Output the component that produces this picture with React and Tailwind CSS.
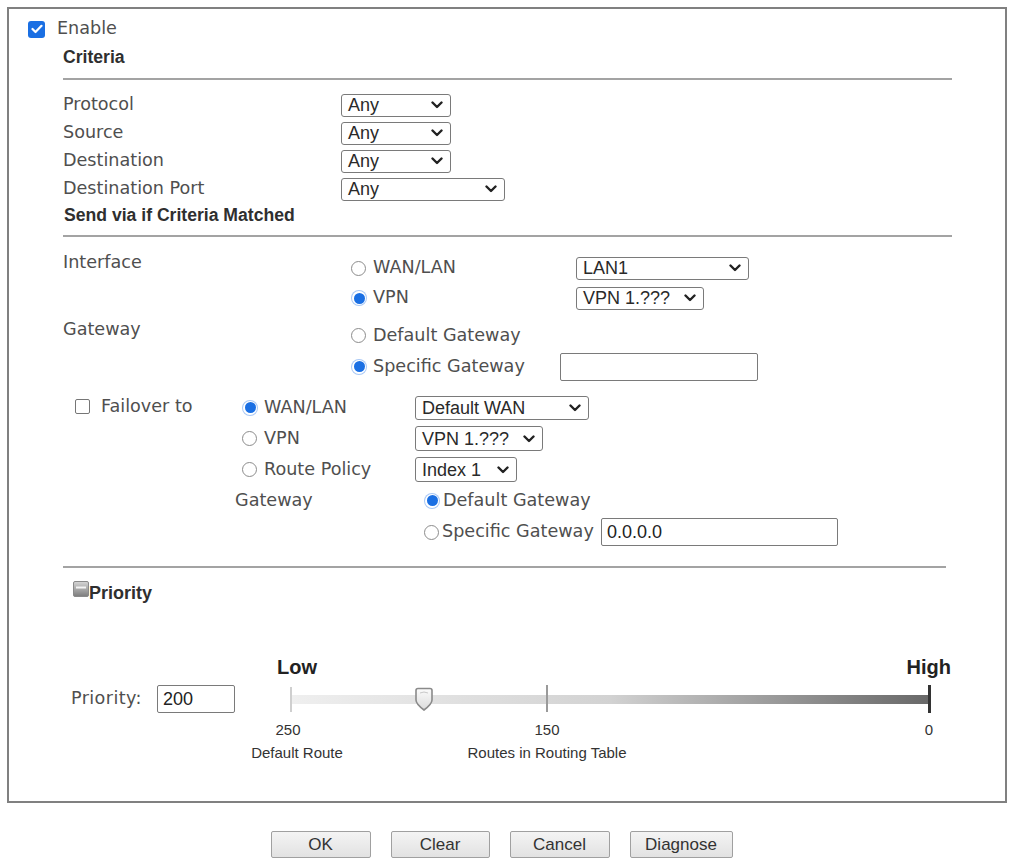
import React from "react";

const label = "font-['DejaVu_Sans',sans-serif] text-[17.6px] leading-none text-[#4f4f4f]";
const bold = "font-['Liberation_Sans',Arial,sans-serif] text-[17.6px] font-bold leading-none text-[#2f2f2f]";
const arial = "font-['Liberation_Sans',Arial,sans-serif]";

const Chevron = () => (
  <svg width="12" height="8" viewBox="0 0 12 8" className="shrink-0">
    <path d="M1.5 1.5 L6 6 L10.5 1.5" stroke="#222" strokeWidth="2.4" fill="none" strokeLinecap="round" strokeLinejoin="round" />
  </svg>
);

const Select = ({ w, h = "h-[23px]", text }) => (
  <div className={`flex ${h} ${w} items-center justify-between rounded-[3px] border border-[#7a7a7a] bg-white pl-[6px] pr-[7px]`}>
    <span className={`${arial} text-[18px] leading-none text-[#2a2a2a]`}>{text}</span>
    <Chevron />
  </div>
);

const Radio = ({ checked }) =>
  checked ? (
    <div className="flex h-[16px] w-[16px] shrink-0 items-center justify-center rounded-full bg-[#a9c8f5]">
      <div className="flex h-[14px] w-[14px] items-center justify-center rounded-full bg-white">
        <div className="h-[11px] w-[11px] rounded-full bg-[#1a6fe3]" />
      </div>
    </div>
  ) : (
    <div className="h-[15px] w-[15px] shrink-0 rounded-full border border-[#8c8c8c] bg-white" />
  );

const TextBox = ({ w, value = "" }) => (
  <div className={`flex h-[28px] ${w} items-center rounded-[2px] border border-[#7a7a7a] bg-white px-[5px]`}>
    <span className={`${arial} text-[18px] leading-none text-[#222]`}>{value}</span>
  </div>
);

const Divider = ({ w }) => <div className={`ml-[54px] ${w} border-t-2 border-[#a3a3a3]`} />;

const CriteriaRow = ({ name, w }) => (
  <div className="flex h-[28px] items-center pl-[54px]">
    <div className={`w-[278px] ${label}`}>{name}</div>
    <Select w={w} text="Any" />
  </div>
);

const Btn = ({ children, w = "w-[100px]" }) => (
  <button className={`h-[27px] ${w} rounded-[2px] border border-[#a0a0a0] bg-gradient-to-b from-[#f4f4f4] to-[#e2e2e2] ${arial} text-[17px] leading-none text-[#333]`}>
    {children}
  </button>
);

const Thumb = () => (
  <svg width="22" height="25" viewBox="0 0 22 25">
    <defs>
      <linearGradient id="tg" x1="0" y1="0" x2="0" y2="1">
        <stop offset="0" stopColor="#fbfbfb" />
        <stop offset="1" stopColor="#dcdcdc" />
      </linearGradient>
    </defs>
    <path d="M3 3.5 Q3 1.5 5 1.5 L17 1.5 Q19 1.5 19 3.5 L19 13 Q19 17 11 23 Q3 17 3 13 Z" fill="url(#tg)" stroke="#8a8a8a" strokeWidth="1.6" />
    <path d="M7 6 Q11 4 15 6" stroke="#c8c8c8" strokeWidth="1" fill="none" />
  </svg>
);

const PriorityIcon = () => (
  <svg width="16" height="16" viewBox="0 0 16 16" className="mb-[8px] shrink-0">
    <defs>
      <linearGradient id="pg" x1="0" y1="0" x2="0" y2="1">
        <stop offset="0" stopColor="#d6d6d6" />
        <stop offset="0.5" stopColor="#a9a9a9" />
        <stop offset="1" stopColor="#7c7c7c" />
      </linearGradient>
    </defs>
    <rect x="0.5" y="0.5" width="15" height="15" rx="1.5" fill="url(#pg)" stroke="#8a8a8a" />
    <rect x="3" y="5.5" width="10" height="2" fill="#f4f4f4" />
  </svg>
);

export default function App() {
  return (
    <div className="h-[865px] w-[1012px] bg-white pl-[7px] pt-[7px]">
      <div className="h-[796px] w-[1000px] border-2 border-[#808080]">
        {/* Enable */}
        <div className="mt-[8px] flex h-[24px] items-center pl-[19px]">
          <div className="flex h-[17px] w-[17px] items-center justify-center rounded-[3px] bg-[#1a6fe3]">
            <svg width="12" height="10" viewBox="0 0 12 10">
              <path d="M1.5 5 L4.5 8 L10.5 1.8" stroke="#fff" strokeWidth="2.2" fill="none" strokeLinecap="round" strokeLinejoin="round" />
            </svg>
          </div>
          <span className={`ml-[12px] ${label} text-[#3a3a3a]`}>Enable</span>
        </div>

        {/* Criteria */}
        <div className="mt-[5px] flex h-[24px] items-center pl-[54px]">
          <span className={bold}>Criteria</span>
        </div>
        <div className="mt-[8px]">
          <Divider w="w-[889px]" />
        </div>

        <div className="mt-[11px]">
          <CriteriaRow name="Protocol" w="w-[110px]" />
          <CriteriaRow name="Source" w="w-[110px]" />
          <CriteriaRow name="Destination" w="w-[110px]" />
          <CriteriaRow name="Destination Port" w="w-[164px]" />
        </div>

        <div className="flex h-[26px] items-center pl-[55px]">
          <span className={bold}>Send via if Criteria Matched</span>
        </div>
        <div className="mt-[6px]">
          <Divider w="w-[889px]" />
        </div>

        {/* Interface */}
        <div className="mt-[16px] flex pl-[54px]">
          <div className={`w-[278px] pt-[1px] ${label}`}>Interface</div>
          <div>
            <div className="flex h-[30px] items-center">
              <div className="flex w-[235px] items-center pl-[10px]">
                <Radio />
                <span className={`ml-[7px] ${label} text-[#3e3e3e]`}>WAN/LAN</span>
              </div>
              <Select w="w-[173px]" text="LAN1" />
            </div>
            <div className="flex h-[30px] items-center">
              <div className="flex w-[235px] items-center pl-[10px]">
                <Radio checked />
                <span className={`ml-[6px] ${label} text-[#3e3e3e]`}>VPN</span>
              </div>
              <Select w="w-[128px]" text="VPN 1.???" />
            </div>
          </div>
        </div>

        {/* Gateway */}
        <div className="mt-[7px] flex pl-[54px]">
          <div className={`w-[278px] pt-[1px] ${label}`}>Gateway</div>
          <div>
            <div className="flex h-[31px] items-center pl-[10px]">
              <Radio />
              <span className={`ml-[7px] ${label} text-[#3e3e3e]`}>Default Gateway</span>
            </div>
            <div className="flex h-[31px] items-center">
              <div className="flex w-[219px] items-center pl-[10px]">
                <Radio checked />
                <span className={`ml-[6px] ${label} text-[#3e3e3e]`}>Specific Gateway</span>
              </div>
              <TextBox w="w-[198px]" />
            </div>
          </div>
        </div>

        {/* Failover */}
        <div className="mt-[10px] pl-[54px]">
          <div className="flex h-[31px] items-center">
            <div className="flex w-[172px] items-center pl-[12px]">
              <div className="mt-[-3px] h-[15px] w-[15px] rounded-[2px] border border-[#767676] bg-white" />
              <span className={`ml-[11px] mt-[-2px] ${label}`}>Failover to</span>
            </div>
            <div className="flex w-[180px] items-center pl-[7px]">
              <Radio checked />
              <span className={`ml-[6px] ${label} text-[#3e3e3e]`}>WAN/LAN</span>
            </div>
            <Select w="w-[174px]" h="h-[24px]" text="Default WAN" />
          </div>
          <div className="flex h-[31px] items-center">
            <div className="w-[172px]" />
            <div className="flex w-[180px] items-center pl-[7px]">
              <Radio />
              <span className={`ml-[7px] ${label} text-[#3e3e3e]`}>VPN</span>
            </div>
            <Select w="w-[128px]" h="h-[25px]" text="VPN 1.???" />
          </div>
          <div className="flex h-[31px] items-center">
            <div className="w-[172px]" />
            <div className="flex w-[180px] items-center pl-[7px]">
              <Radio />
              <span className={`ml-[7px] ${label} text-[#3e3e3e]`}>Route Policy</span>
            </div>
            <Select w="w-[102px]" h="h-[25px]" text="Index 1" />
          </div>
          <div className="flex h-[31px] items-center">
            <div className="w-[172px]" />
            <div className={`w-[180px] ${label}`}>Gateway</div>
            <div className="flex items-center pl-[9px]">
              <Radio checked />
              <span className={`ml-[3px] ${label} text-[#3e3e3e]`}>Default Gateway</span>
            </div>
          </div>
          <div className="flex h-[32px] items-center">
            <div className="w-[352px]" />
            <div className="flex w-[186px] items-center pl-[9px]">
              <Radio />
              <span className={`ml-[3px] ${label} text-[#3e3e3e]`}>Specific Gateway</span>
            </div>
            <TextBox w="w-[237px]" value="0.0.0.0" />
          </div>
        </div>

        <div className="mt-[18px]">
          <Divider w="w-[883px]" />
        </div>

        {/* Priority */}
        <div className="mt-[12px] flex h-[26px] items-center pl-[64px]">
          <PriorityIcon />
          <span className={`${bold} text-[18px]`}>Priority</span>
        </div>

        <div className="mt-[46px] flex items-start">
          <div className="mt-[33px] flex h-[28px] w-[268px] items-center pl-[62px]">
            <span className={`w-[86px] ${label} tracking-[0.4px]`}>Priority:</span>
            <TextBox w="w-[78px]" value="200" />
          </div>
          <div className="relative h-[120px] w-[674px]">
            <span className={`absolute left-0 top-[3px] ${arial} text-[20px] font-bold leading-[24px] text-[#222]`}>Low</span>
            <span className={`absolute right-0 top-[3px] ${arial} text-[20px] font-bold leading-[24px] text-[#222]`}>High</span>
            <div className="absolute left-[14px] top-[43px] h-[9px] w-[639px] bg-gradient-to-r from-[#efefef] via-[#d2d2d2] to-[#686868]" />
            <div className="absolute left-[13px] top-[35px] h-[25px] w-[2px] bg-[#cfcfcf]" />
            <div className="absolute left-[269px] top-[33px] h-[27px] w-[2px] bg-[#9a9a9a]" />
            <div className="absolute left-[651px] top-[33px] h-[28px] w-[3px] bg-[#333]" />
            <div className="absolute left-[136px] top-[35px]">
              <Thumb />
            </div>
            <span className={`absolute left-[11px] top-[69px] -translate-x-1/2 ${arial} text-[15px] leading-[17px] text-[#333]`}>250</span>
            <span className={`absolute left-[20px] top-[92px] -translate-x-1/2 whitespace-nowrap ${arial} text-[15px] leading-[17px] text-[#333]`}>Default Route</span>
            <span className={`absolute left-[270px] top-[69px] -translate-x-1/2 ${arial} text-[15px] leading-[17px] text-[#333]`}>150</span>
            <span className={`absolute left-[270px] top-[92px] -translate-x-1/2 whitespace-nowrap ${arial} text-[15px] leading-[17px] text-[#333]`}>Routes in Routing Table</span>
            <span className={`absolute left-[652px] top-[69px] -translate-x-1/2 ${arial} text-[15px] leading-[17px] text-[#333]`}>0</span>
          </div>
        </div>
      </div>

      <div className="mt-[28px] flex w-[1000px] justify-center gap-[20px] pr-[11px]">
        <Btn>OK</Btn>
        <Btn w="w-[99px]">Clear</Btn>
        <Btn>Cancel</Btn>
        <Btn w="w-[103px]">Diagnose</Btn>
      </div>
    </div>
  );
}
